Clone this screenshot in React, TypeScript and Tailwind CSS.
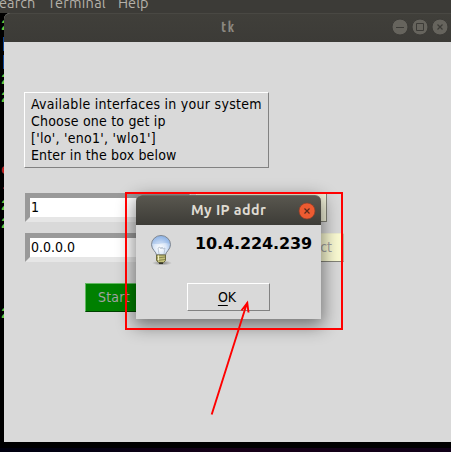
import React from "react";

const dejavu = "font-['DejaVu_Sans_Condensed','DejaVu_Sans',sans-serif] [font-stretch:condensed]";
const ubuntu = "font-['Ubuntu','Noto_Sans',sans-serif]";

const GREEN = "text-[#6ac43b]";
const RED = "text-[#c52222]";
const BLUE = "text-[#4c87ba]";

const terminalRows: [string, string][] = [
  ["2", GREEN], ["[", BLUE], ["[", BLUE], ["2", GREEN], ["2", GREEN],
  ["", ""], ["", ""], ["", ""],
  ["e", RED], ["-", RED], ["2", GREEN], ["2", GREEN],
  ["", ""], ["", ""], ["", ""], ["", ""],
  ["2", GREEN],
];

function WindowControls() {
  return (
    <svg width="61" height="28" viewBox="390 14 61 28" fill="none" stroke="#3c3b37" strokeWidth="1">
      <circle cx="400" cy="27" r="8" fill="#66645d" />
      <circle cx="420" cy="27" r="8" fill="#66645d" />
      <circle cx="440" cy="27" r="8" fill="#66645d" />
      <path d="M396 27.5h8M416.5 23.5h7v7h-7z" />
      <path d="M437.500 24.500l5 5M442.500 24.500l-5 5" strokeWidth="1.200" />
    </svg>
  );
}

function Entry({ value }: { value: string }) {
  return (
    <div className="h-[29px] w-[166px] border-[5px] border-t-[#999] border-l-[#999] border-r-[#e6e6e6] border-b-[#e6e6e6] bg-white pl-px text-[14px] leading-[19px] text-black">
      {value}
    </div>
  );
}

function Bulb() {
  return (
    <svg width="26" height="36" viewBox="148 232 26 36">
      <defs>
        <radialGradient id="glass" cx=".45" cy=".65" r=".65">
          <stop offset="0" stopColor="#fff" />
          <stop offset=".5" stopColor="#dce8f8" />
          <stop offset="1" stopColor="#8fb4e6" />
        </radialGradient>
        <radialGradient id="floor">
          <stop offset="0" stopColor="#555" stopOpacity=".7" />
          <stop offset="1" stopColor="#555" stopOpacity="0" />
        </radialGradient>
      </defs>
      <ellipse cx="162" cy="263" rx="10" ry="2.500" fill="url(#floor)" />
      <path d="M156.500 255c0-3-5-5.500-5-10.300a9.500 9.200 0 0 1 19 0c0 4.800-5 7.300-5 10.300z" fill="url(#glass)" stroke="#7d8590" />
      <path d="M153 243.500a8 7.500 0 0 1 16 0c-5-2-11 2-16 0z" fill="#79a5e0" opacity=".3" />
      <path d="M159 254l-1-6 2-1 1 2 1-2 1 2 2-1-1 6" fill="none" stroke="#a8b5c5" strokeWidth=".7" />
      <path d="M156.500 255h9v5.500l-2 2h-5l-2-2z" fill="#c4c17a" stroke="#6d6b40" />
      <path d="M157 258l8-1M157 260.500l8-1" stroke="#6d6b40" strokeWidth=".7" />
      <path d="M158.500 255.500v5" stroke="#f2f0c4" />
      <path d="M159 263.300h4" stroke="#33352a" strokeWidth="1.500" />
    </svg>
  );
}

function Dialog() {
  return (
    <section className="absolute left-[136px] top-[195px] flex h-[124px] w-[185px] flex-col rounded-t-[6px] bg-[#d9d9d9] shadow-[0_5px_18px_2px_rgba(0,0,0,0.48)]">
      <header className={`flex h-[30px] items-center justify-between rounded-t-[6px] border-t border-[#6a675e] bg-linear-to-b from-[#59574f] to-[#3d3c37] pr-[5px] pl-[55px] text-[14.300px] font-bold text-[#dfdbd2] ${ubuntu}`}>
        <span className="whitespace-nowrap leading-[29px] tracking-[0.400px]">My IP addr</span>
        <svg width="18" height="18" viewBox="0 0 18 18">
          <circle cx="9" cy="9" r="8" fill="#ed5b31" stroke="#8e3e28" strokeWidth=".7" />
          <path d="M6.500 6.500l5 5M11.500 6.500l-5 5" stroke="#5b2b1d" strokeWidth="1.200" />
        </svg>
      </header>
      <div className="flex h-[42px] gap-[21px] pt-[7px] pl-3">
        <Bulb />
        <p className="whitespace-nowrap font-['DejaVu_Sans',sans-serif] text-[16px] font-bold leading-[23px] tracking-[-0.120px] text-black">10.4.224.239</p>
      </div>
      <div className="flex pt-4 pl-[51px]">
        <button className={`h-7 w-[83px] border border-t-white border-l-white border-r-[#828282] border-b-[#828282] pr-[3px] text-[14px] leading-[26px] text-black ${dejavu}`}>
          <span className="underline underline-offset-[3px]">O</span>K
        </button>
      </div>
    </section>
  );
}

export default function App() {
  return (
    <div className="relative flex h-[452px] w-[451px] flex-col overflow-hidden bg-black">
      <div className={`flex h-[13px] shrink-0 items-end gap-[12px] bg-[#3c3b37] text-[14.500px] leading-5 text-[#b5b1a9] ${ubuntu}`}>
        <span className="-ml-px tracking-[0.100px]">earch</span>
        <span className="tracking-[0.250px]">Terminal</span>
        <span className="tracking-[0.100px]">Help</span>
      </div>
      <div className="flex h-[435px] shrink-0 flex-col overflow-hidden pt-[5px] pl-px font-['Liberation_Mono',monospace] text-[14px] font-bold">
        {terminalRows.map(([text, color], i) => (
          <div key={i} className={`h-[18px] shrink-0 leading-4 ${color}`}>{text}</div>
        ))}
      </div>
      <div className="h-1 bg-linear-to-r from-[#00000f] via-[#170018] to-[#100018]" />

      <main className={`absolute left-1 top-[13px] flex h-[429px] w-[447px] flex-col rounded-tl-[6px] bg-[#d9d9d9] ${dejavu}`}>
        <header className={`flex h-[29px] shrink-0 justify-between rounded-tl-[6px] border-t border-[#494843] bg-linear-to-b from-[#403f3a] to-[#3c3b37] pl-[217px] text-[14.500px] font-bold text-[#8b8880] ${ubuntu}`}>
          <span className="leading-[26px] tracking-[1.500px]">tk</span>
          <WindowControls />
        </header>
        <div className="flex flex-col items-start gap-[11px] pt-[50px] pl-[21px]">
          <div className="mb-[14px] -ml-px h-[76px] w-[245px] whitespace-nowrap border border-t-white border-l-white border-r-[#828282] border-b-[#828282] pt-[3px] pl-[6px] text-[14px] leading-[17px] text-black">
            <p className="tracking-[0.280px]">Available interfaces in your system</p>
            <p className="tracking-[0.200px]">Choose one to get ip</p>
            <p className="tracking-[0.280px]">['lo', 'eno1', 'wlo1']</p>
            <p className="tracking-[0.160px]">Enter in the box below</p>
          </div>
          <div className="flex gap-[5px]">
            <Entry value="1" />
            <div className="h-[29px] w-[131px] border border-[#fafae8] border-r-[#838378] border-b-[#838378] bg-[#f5f5dc]" />
          </div>
          <div className="flex gap-[5px]">
            <Entry value="0.0.0.0" />
            <div className="h-[29px] w-[148px] border border-[#eeeecf] border-r-[#b8b8a0] border-b-[#838378] bg-[#fafad2] pr-[11px] text-right text-[14px] leading-[26px] text-[#a3a3a3]">Connect</div>
          </div>
          <div className="mt-[10px] ml-[60px] h-[29px] w-[115px] border border-[#62b962] border-b-[#004000] bg-[#008000] pl-3 text-[14px] leading-[26px] tracking-[0.200px] text-[#a3a3a3]">Start</div>
        </div>
      </main>

      <Dialog />
      <svg className="absolute left-0 top-0" width="451" height="452" fill="none" stroke="#f00" strokeWidth="2">
        <path d="M126 193h216v136H126z" />
        <path d="M211.700 414.500L247 303M241.500 310.500l5.800-7.500 1.200 9.500" strokeWidth="1.900" />
      </svg>
    </div>
  );
}
